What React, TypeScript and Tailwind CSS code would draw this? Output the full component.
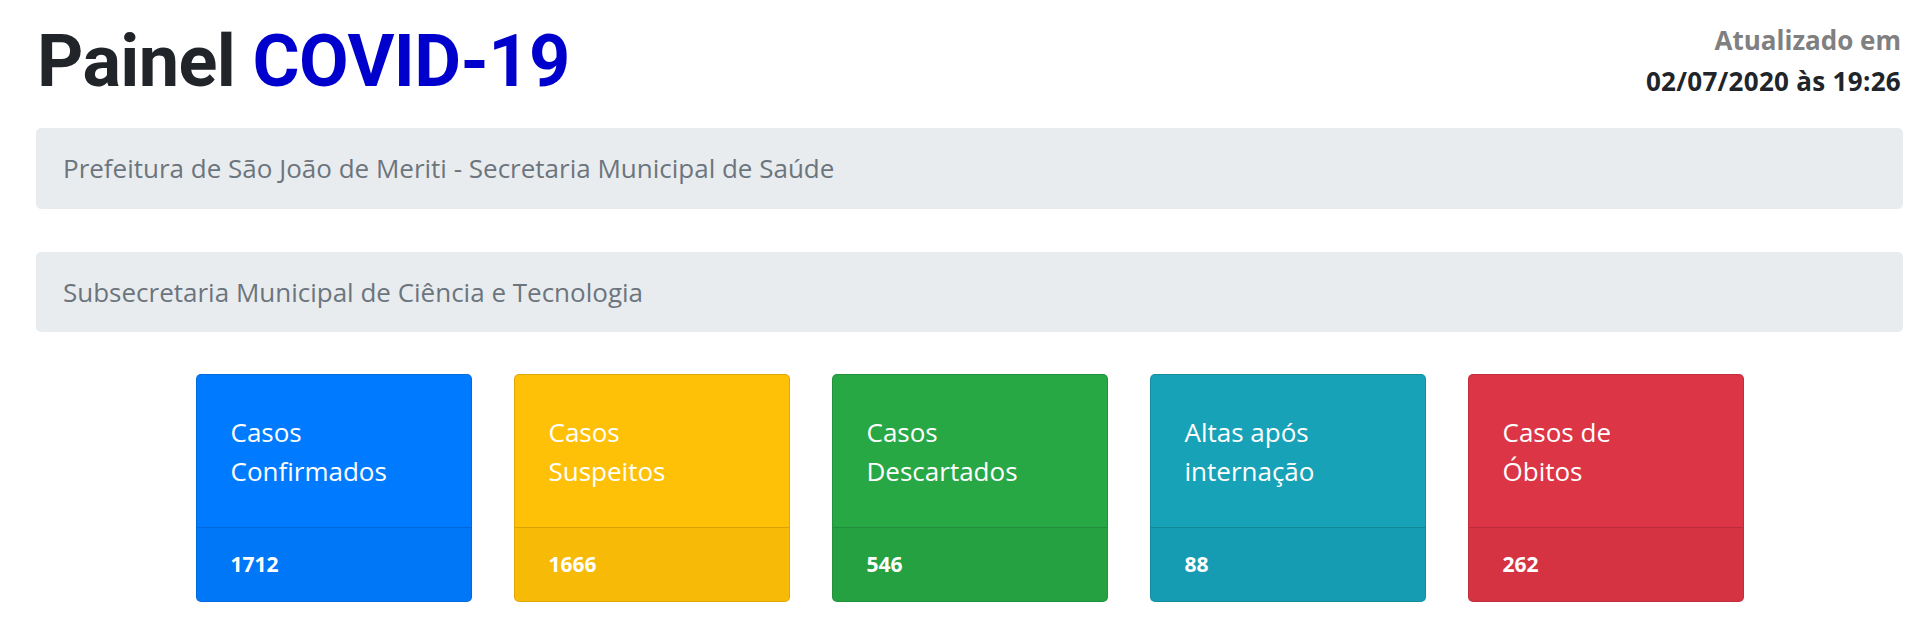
import React from "react";

const cards = [
  { l1: "Casos", l2: "Confirmados", n: "1712", bg: "bg-[#007bff]" },
  { l1: "Casos", l2: "Suspeitos", n: "1666", bg: "bg-[#ffc107]" },
  { l1: "Casos", l2: "Descartados", n: "546", bg: "bg-[#28a745]" },
  { l1: "Altas após", l2: "internação", n: "88", bg: "bg-[#17a2b8]" },
  { l1: "Casos de", l2: "Óbitos", n: "262", bg: "bg-[#dc3545]" },
];

const os = { fontFamily: "'Open Sans', 'Noto Sans', sans-serif" };

export default function App() {
  return (
    <div
      className="w-[1920px] h-[627px] bg-white overflow-hidden pl-[36px] pr-[17px]"
      style={os}
    >
      <div className="flex justify-between items-start">
        <h1
          className="mt-[19px] pl-[1px] text-[72px] leading-[1.2] font-bold text-[#212529] tracking-[-0.6px]"
          style={{ fontFamily: "Roboto, sans-serif" }}
        >
          Painel <span className="text-[#0000cd]">COVID-19</span>
        </h1>
        <div className="mt-[20px] pr-[2px] text-right font-bold text-[26px] leading-[41px]">
          <div className="text-[#808080]">Atualizado em</div>
          <div className="text-[#212529] tracking-[0.3px]">02/07/2020 às 19:26</div>
        </div>
      </div>

      <div className="mt-[23px] h-[81px] rounded-[5px] bg-[#e9ecef] flex items-center pl-[27px] text-[26px] text-[#6c757d]">
        Prefeitura de São João de Meriti - Secretaria Municipal de Saúde
      </div>
      <div className="mt-[43px] h-[80px] rounded-[5px] bg-[#e9ecef] flex items-center pl-[27px] text-[26px] text-[#6c757d]">
        Subsecretaria Municipal de Ciência e Tecnologia
      </div>

      <div className="mt-[42px] flex justify-center gap-[42px]">
        {cards.map((c) => (
          <div
            key={c.n}
            className={`w-[276px] h-[228px] rounded-[5px] border border-black/[0.125] ${c.bg} text-white flex flex-col overflow-hidden`}
          >
            <div className="h-[152px] pl-[34px] pt-[38px] text-[26px] leading-[39px]">
              <div>{c.l1}</div>
              <div>{c.l2}</div>
            </div>
            <div className="flex-1 bg-black/[0.03] border-t border-black/[0.125] pl-[34px] flex items-center font-bold text-[21px]">
              {c.n}
            </div>
          </div>
        ))}
      </div>
    </div>
  );
}
